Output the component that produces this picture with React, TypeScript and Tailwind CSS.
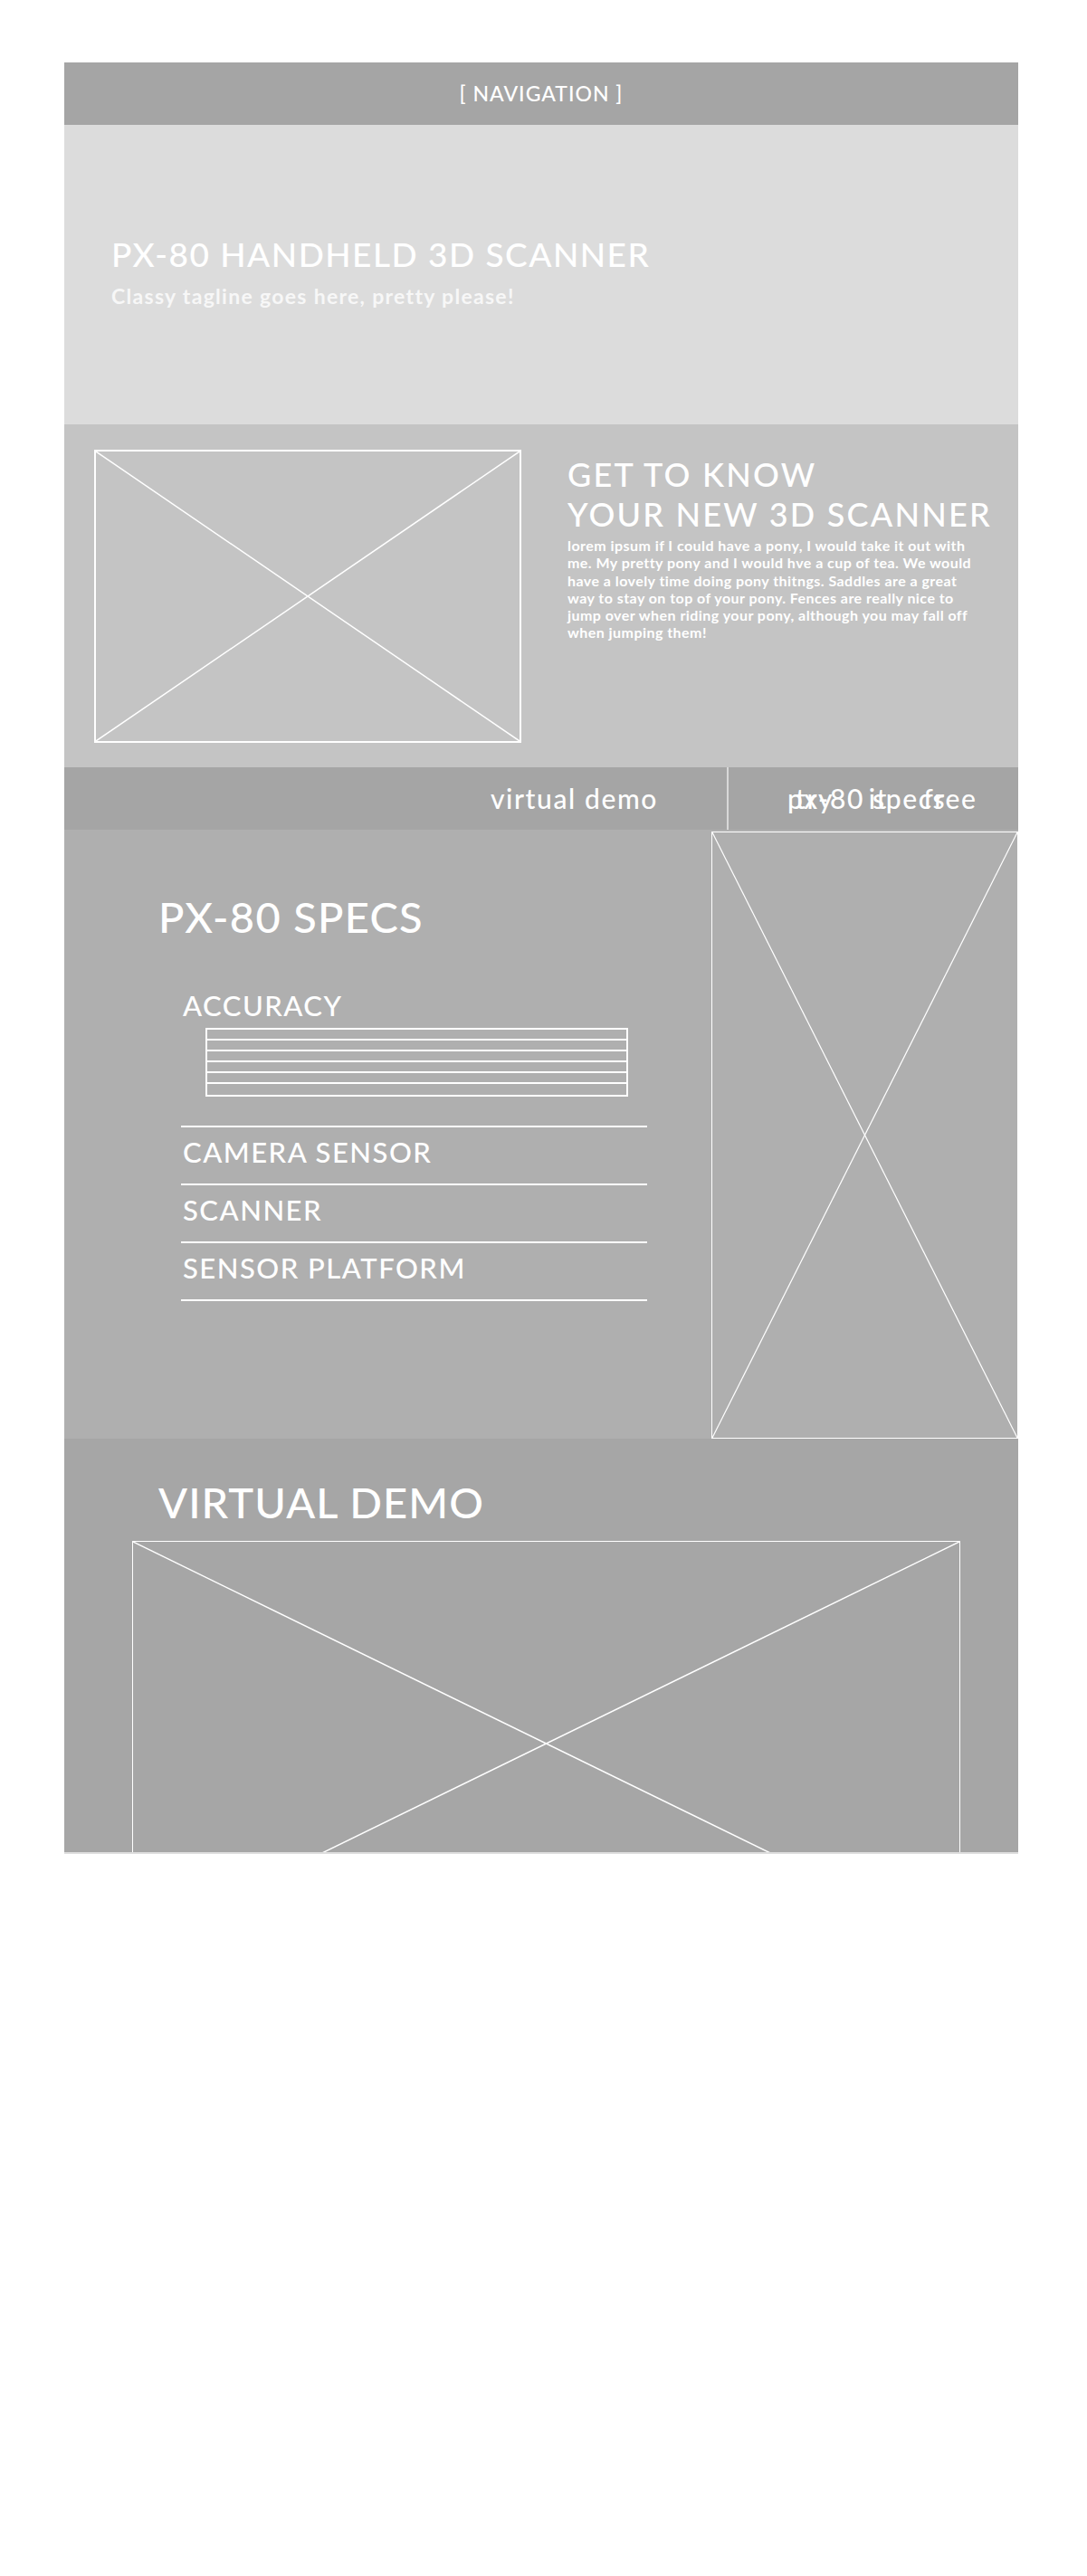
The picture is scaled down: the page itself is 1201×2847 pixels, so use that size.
import React from 'react';

const specItems = ['CAMERA SENSOR', 'SCANNER', 'SENSOR PLATFORM'];

const aboutLines = [
  'lorem ipsum if I could have a pony, I would take it out with',
  'me. My pretty pony and I would hve a cup of tea. We would',
  'have a lovely time doing pony thitngs. Saddles are a great',
  'way to stay on top of your pony. Fences are really nice to',
  'jump over when riding your pony, although you may fall off',
  'when jumping them!',
];

// wireframe image box with an X through it
const Placeholder = ({ className, stroke = 2 }: { className: string; stroke?: number }) => (
  <div className={`relative border-white ${className}`}>
    <svg className="absolute inset-0 h-full w-full" viewBox="0 0 100 100" preserveAspectRatio="none">
      <line x1="0" y1="0" x2="100" y2="100" stroke="white" strokeWidth={stroke} vectorEffect="non-scaling-stroke" />
      <line x1="100" y1="0" x2="0" y2="100" stroke="white" strokeWidth={stroke} vectorEffect="non-scaling-stroke" />
    </svg>
  </div>
);

const App = () => {
  return (
    <div className="min-h-[2847px] bg-white pt-[69px] text-white font-['Lato','Liberation_Sans',sans-serif]">
      <div className="ml-[71px] w-[1054px]">
        {/* Nav */}
        <nav className="flex h-[69px] items-center justify-center bg-[#a5a5a5]">
          <span className="text-[23px] font-medium tracking-[1px]">[ NAVIGATION ]</span>
        </nav>

        {/* Hero */}
        <header className="h-[331px] bg-[#dcdcdc] pl-[52px] pt-[121px]">
          <h1 className="text-[37px] font-medium leading-[44px] tracking-[1.5px]">PX-80 HANDHELD 3D SCANNER</h1>
          <p className="mt-[10px] text-[23px] font-bold leading-[28px] tracking-[1.3px] text-[#f7f7f7]">
            Classy tagline goes here, pretty please!
          </p>
        </header>

        {/* Get to know */}
        <section className="flex h-[379px] bg-[#c4c4c4] pl-[33px] pt-[28px]">
          <Placeholder className="h-[324px] w-[472px] border-2" stroke={1.5} />
          <div className="ml-[51px] w-[490px] pt-[5px]">
            <h2 className="text-[36px] font-medium leading-[44px] tracking-[2.2px]">
              GET TO KNOW
              <br />
              YOUR NEW 3D SCANNER
            </h2>
            <p className="mt-[3px] whitespace-nowrap text-[16px] font-bold leading-[19.3px] tracking-[0.45px]">
              {aboutLines.map((line) => (
                <span key={line} className="block">
                  {line}
                </span>
              ))}
            </p>
          </div>
        </section>

        {/* Tabs */}
        <div className="flex h-[69px] bg-[#a5a5a5]">
          <div className="flex w-[734px] items-center justify-end border-r-2 border-[#d8d8d8] pr-[76px]">
            <span className="text-[30px] font-medium tracking-[1.6px]">virtual demo</span>
          </div>
          <div className="relative flex flex-1 items-center pl-[65px]">
            <span className="text-[30px] font-medium tracking-[1.6px]">px-80 specs</span>
            <span className="absolute left-[74px] text-[30px] font-medium tracking-[1.6px] [word-spacing:30px]">
              try it free
            </span>
          </div>
        </div>

        {/* Specs */}
        <section className="flex h-[673px] bg-[#afafaf]">
          <div className="flex-1 pl-[104px] pt-[68px]">
            <h2 className="text-[47px] font-medium leading-[56px] tracking-[1.3px]">PX-80 SPECS</h2>
            <div className="ml-[25px] mt-[52px] w-[515px]">
              <div className="pb-[32px]">
                <h3 className="pl-[2px] text-[31px] font-medium leading-[36px] tracking-[1.5px]">ACCURACY</h3>
                <div className="ml-[27px] mt-[7px] w-[467px] border-2 border-white">
                  {[0, 1, 2, 3, 4, 5].map((i) => (
                    <div key={i} className="h-[12px] border-b-2 border-white last:border-b-0" />
                  ))}
                </div>
              </div>
              {specItems.map((item) => (
                <div key={item} className="border-t-2 border-white pl-[2px] pt-[9px] pb-[17px]">
                  <h3 className="text-[31px] font-medium leading-[36px] tracking-[1.5px]">{item}</h3>
                </div>
              ))}
              <div className="border-t-2 border-white" />
            </div>
          </div>
          <Placeholder className="mt-[2px] h-[671px] w-[339px] border-[1.5px]" stroke={1.2} />
        </section>

        {/* Virtual demo */}
        <section className="h-[459px] overflow-hidden border-b-2 border-[#dedede] bg-[#a6a6a6] pt-[42px]">
          <h2 className="pl-[104px] text-[47px] font-medium leading-[56px] tracking-[1.1px]">VIRTUAL DEMO</h2>
          <Placeholder className="ml-[75px] mt-[15px] h-[448px] w-[915px] border-[1.5px]" stroke={1.5} />
        </section>
      </div>
    </div>
  );
};

export default App;
